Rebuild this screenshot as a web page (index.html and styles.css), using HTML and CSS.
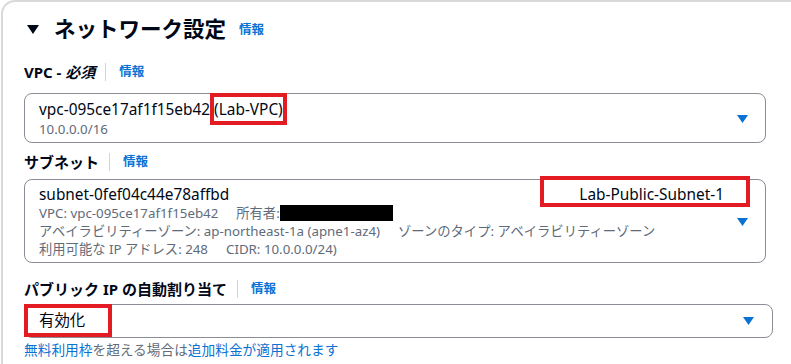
FILE: index.html
```html
<!DOCTYPE html>
<html lang="ja">
<head>
    <meta charset="UTF-8">
    <meta name="viewport" content="width=device-width, initial-scale=1.0">
    <title>ネットワーク設定</title>
    <link rel="stylesheet" href="styles.css">
</head>
<body>
    <div class="panel">
        <!-- 見出し -->
        <h2 class="panel-title">
            <svg class="caret" width="12" height="9" viewBox="0 0 12 9"><path d="M0 0H12L6 9Z" fill="#000716"/></svg>
            <span>ネットワーク設定</span>
            <a class="info">情報</a>
        </h2>

        <!-- VPC -->
        <div class="field field-vpc">
            <div class="field-label">
                <span>VPC - <i>必須</i></span>
                <span class="sep"></span>
                <a class="info">情報</a>
            </div>
            <div class="select">
                <div class="select-body">
                    <div class="value">vpc-095ce17af1f15eb42 <span class="mark mark-vpc">(Lab-VPC)</span></div>
                    <div class="desc">10.0.0.0/16</div>
                </div>
                <svg class="arrow" width="11" height="8" viewBox="0 0 11 8"><path d="M0 0H11L5.5 8Z" fill="#0972d3"/></svg>
            </div>
        </div>

        <!-- サブネット -->
        <div class="field field-subnet">
            <div class="field-label">
                <span>サブネット</span>
                <span class="sep"></span>
                <a class="info">情報</a>
            </div>
            <div class="select">
                <div class="select-body">
                    <div class="value value-split">
                        <span>subnet-0fef04c44e78affbd</span>
                        <span class="mark mark-subnet">Lab-Public-Subnet-1</span>
                    </div>
                    <div class="desc"><span class="gap">VPC: vpc-095ce17af1f15eb42</span>所有者:<span class="redact"></span></div>
                    <div class="desc"><span class="gap">アベイラビリティーゾーン: ap-northeast-1a (apne1-az4)</span>ゾーンのタイプ: アベイラビリティーゾーン</div>
                    <div class="desc"><span class="gap">利用可能な IP アドレス: 248</span>CIDR: 10.0.0.0/24)</div>
                </div>
                <svg class="arrow" width="11" height="8" viewBox="0 0 11 8"><path d="M0 0H11L5.5 8Z" fill="#0972d3"/></svg>
            </div>
        </div>

        <!-- パブリック IP -->
        <div class="field field-ip">
            <div class="field-label">
                <span>パブリック IP の自動割り当て</span>
                <span class="sep"></span>
                <a class="info">情報</a>
            </div>
            <div class="select select-wide">
                <div class="select-body">
                    <div class="value"><span class="mark mark-ip">有効化</span></div>
                </div>
                <svg class="arrow" width="11" height="8" viewBox="0 0 11 8"><path d="M0 0H11L5.5 8Z" fill="#0972d3"/></svg>
            </div>
            <p class="hint"><a>無料利用枠</a>を超える場合は<a>追加料金が適用されます</a></p>
        </div>
    </div>
</body>
</html>
```

FILE: styles.css
```css
html, body {
    margin: 0;
    padding: 0;
    overflow: hidden;
    background: #ffffff;
}
body {
    font-family: "Noto Sans", "Noto Sans CJK JP", sans-serif;
    color: #000716;
}
.panel {
    height: 364px;
    box-sizing: border-box;
    margin-left: 1px;
    padding: 12px 0 0 21px;
    border-top: 2px solid #d9d9dc;
    border-left: 2px solid #d9d9dc;
    border-top-left-radius: 14px;
}
.panel-title {
    display: flex;
    align-items: center;
    margin: 0;
    height: 30px;
    font-size: 21.5px;
    font-weight: 700;
    line-height: 30px;
}
.caret {
    margin: 1px 15px 0 3px;
}
.panel-title .info {
    margin-left: 13px;
    margin-top: 2px;
}
.info {
    color: #0972d3;
    font-size: 12.5px;
    font-weight: 700;
    text-decoration: none;
}
.field-label {
    display: flex;
    align-items: center;
    height: 20px;
    font-size: 15px;
    font-weight: 700;
    line-height: 20px;
}
.field-label i {
    font-weight: 700;
}
.sep {
    width: 1px;
    height: 18px;
    margin: 0 13px 0 10px;
    background: #d1d5db;
}
.field-vpc {
    margin-top: 18px;
}
.field-vpc .field-label {
    margin-bottom: 11px;
}
.field-subnet {
    margin-top: 9px;
}
.field-subnet .field-label {
    margin-bottom: 7px;
}
.field-ip {
    margin-top: 16px;
}
.field-ip .field-label {
    margin-bottom: 5px;
}
.select {
    display: flex;
    align-items: center;
    width: 742px;
    box-sizing: border-box;
    padding: 6px 17px 4px 14px;
    border: 1px solid #8c8c94;
    border-radius: 8px;
    background: #ffffff;
}
.select-wide {
    width: 749px;
    padding: 6px 18px 6px 14px;
}
.select-body {
    flex: 1;
    margin-right: 13px;
}
.arrow {
    flex: none;
}
.value {
    font-size: 15.4px;
    line-height: 20px;
}
.value-split {
    display: flex;
    justify-content: space-between;
    line-height: 18px;
}
.desc {
    color: #5f6b7a;
    font-size: 13.3px;
    line-height: 18px;
}
.gap {
    margin-right: 18px;
}
.redact {
    display: inline-block;
    width: 113px;
    height: 16px;
    vertical-align: -3px;
    background: #000000;
}
.mark {
    position: relative;
}
.mark::after {
    content: "";
    position: absolute;
    border: 4px solid #e31b23;
}
.mark-vpc::after {
    left: -4px;
    right: -4px;
    top: -6px;
    bottom: -5px;
}
.mark-subnet::after {
    left: -39px;
    right: -26px;
    top: -10px;
    bottom: -3px;
}
.mark-ip::after {
    left: -15px;
    right: -27px;
    top: -6px;
    bottom: -6px;
}
.hint {
    margin: 2px 0 0;
    color: #5f6b7a;
    font-size: 13.7px;
    line-height: 20px;
}
.hint a {
    color: #0972d3;
}
```
